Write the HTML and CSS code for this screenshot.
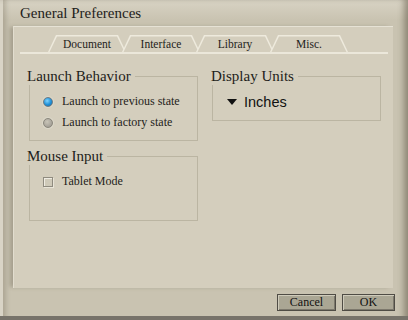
FILE: index.html
```html
<!DOCTYPE html>
<html lang="en">
  <head>
    <meta charset="UTF-8" />
    <title>General Preferences</title>
    <link rel="stylesheet" href="styles.css">
  </head>
  <body>
    <div class="window">
      <div class="title">General Preferences</div>

      <div class="panel">
        <div class="tabs">
          <div class="tab">Document</div>
          <div class="tab active">Interface</div>
          <div class="tab">Library</div>
          <div class="tab">Misc.</div>
        </div>

        <div class="content">
          <div class="col">
            <fieldset class="group launch">
              <legend>Launch Behavior</legend>
              <div class="option"><span class="radio on"></span>Launch to previous state</div>
              <div class="option"><span class="radio"></span>Launch to factory state</div>
            </fieldset>

            <fieldset class="group mouse">
              <legend>Mouse Input</legend>
              <div class="option"><span class="check"></span>Tablet Mode</div>
            </fieldset>
          </div>

          <div class="col">
            <fieldset class="group units">
              <legend>Display Units</legend>
              <div class="dropdown"><span class="arrow"></span>Inches</div>
            </fieldset>
          </div>
        </div>
      </div>

      <div class="footer">
        <button class="btn cancel">Cancel</button>
        <button class="btn ok">OK</button>
      </div>
    </div>
  </body>
</html>
```

FILE: styles.css
```css
body {
  margin: 0;
  font-family: "Liberation Serif", "Times New Roman", serif;
  color: #1e1d1a;
  background: #c9c3b1;
}
.window {
  width: 408px;
  height: 320px;
  display: flex;
  flex-direction: column;
  background: linear-gradient(#d8d3c4, #c9c3b1 20px, #c9c3b1);
  box-shadow: inset -7px 0 6px -3px rgba(70, 62, 45, 0.45),
    inset 3px 0 0 #d9d4c6, inset 8px 0 4px -2px rgba(90, 82, 65, 0.25);
  overflow: hidden;
}
.title {
  height: 26px;
  box-sizing: border-box;
  padding: 5px 0 0 20px;
  font-size: 15px;
  line-height: 17px;
}

/* main panel */
.panel {
  height: 262px;
  box-sizing: border-box;
  margin: 0 15px 0 13px;
  background: #d4cebd;
  border-top: 1px solid #e6e2d5;
  border-left: 1px solid #e2ddcf;
  box-shadow: -4px 0 4px -1px rgba(80, 72, 55, 0.3);
}
.tabs {
  display: flex;
  height: 17px;
  margin: 8px 5px 0 6px;
  padding-left: 30px;
  border-bottom: 2px solid #ebe7da;
}
.tab {
  position: relative;
  z-index: 0;
  width: 74px;
  text-align: center;
  font-size: 11.5px;
  line-height: 18px;
}
.tab::before,
.tab::after {
  content: "";
  position: absolute;
  top: 0;
  bottom: 0;
  left: -2px;
  right: -2px;
  z-index: -1;
}
.tab::before {
  background: #eeeadd;
  clip-path: polygon(0 100%, 8px 0, calc(100% - 8px) 0, 100% 100%);
}
.tab::after {
  background: #d4cebd;
  clip-path: polygon(1.5px 100%, 9px 1.5px, calc(100% - 9px) 1.5px, calc(100% - 1.5px) 100%);
}

/* group boxes */
.content {
  display: flex;
  gap: 14px;
  padding: 14px 0 0 15px;
}
.col {
  width: 169px;
  display: flex;
  flex-direction: column;
  gap: 7px;
}
.group {
  margin: 0;
  padding: 6px 0 7px 13px;
  border: 1px solid #bbb5a2;
  min-width: 0;
}
.group legend {
  margin-left: -16px;
  padding: 0 4px 0 0;
  font-size: 15px;
  line-height: 17px;
}
.mouse {
  padding-bottom: 28px;
}
.units {
  padding: 6px 0 8px 14px;
}
.option {
  display: flex;
  align-items: center;
  height: 21px;
  font-size: 12px;
  line-height: 21px;
}
.radio,
.check {
  width: 10px;
  height: 10px;
  margin-right: 9px;
  box-sizing: border-box;
  flex: none;
}
.radio {
  border-radius: 50%;
  border: 1px solid #8b887d;
  background: radial-gradient(circle at 40% 35%, #c9c5b8, #96928a);
  box-shadow: 0 0 0 1px #dcd8ca;
}
.radio.on {
  border-color: #6f7c84;
  background: radial-gradient(circle at 40% 35%, #7fd4ff, #1f8fd6 55%, #1a6aa0);
}
.check {
  border: 1px solid #8f8b7f;
  background: #cfcab9;
  box-shadow: inset 1px 1px 0 #efece2, 1px 1px 0 #e9e5d8;
}

/* units dropdown */
.dropdown {
  display: flex;
  align-items: center;
  height: 21px;
  font-family: "Liberation Sans", Arial, sans-serif;
  font-size: 14.5px;
  color: #111;
}
.arrow {
  width: 0;
  height: 0;
  margin-right: 7px;
  border-left: 5.5px solid transparent;
  border-right: 5.5px solid transparent;
  border-top: 6px solid #111;
}

/* bottom buttons */
.footer {
  flex: 1;
  display: flex;
  justify-content: flex-end;
  align-items: flex-start;
  gap: 6px;
  padding: 6px 13px 0 0;
  border-bottom: 4px solid #77736a;
}
.btn {
  height: 17px;
  padding: 0;
  font-family: inherit;
  font-size: 12px;
  line-height: 15px;
  color: #111;
  background: #aaa694;
  border: 1px solid #4f4c45;
  box-shadow: inset 1px 1px 0 #cfcbbb, inset -1px -1px 0 #7c786c;
}
.cancel {
  width: 59px;
}
.ok {
  width: 53px;
}
```
